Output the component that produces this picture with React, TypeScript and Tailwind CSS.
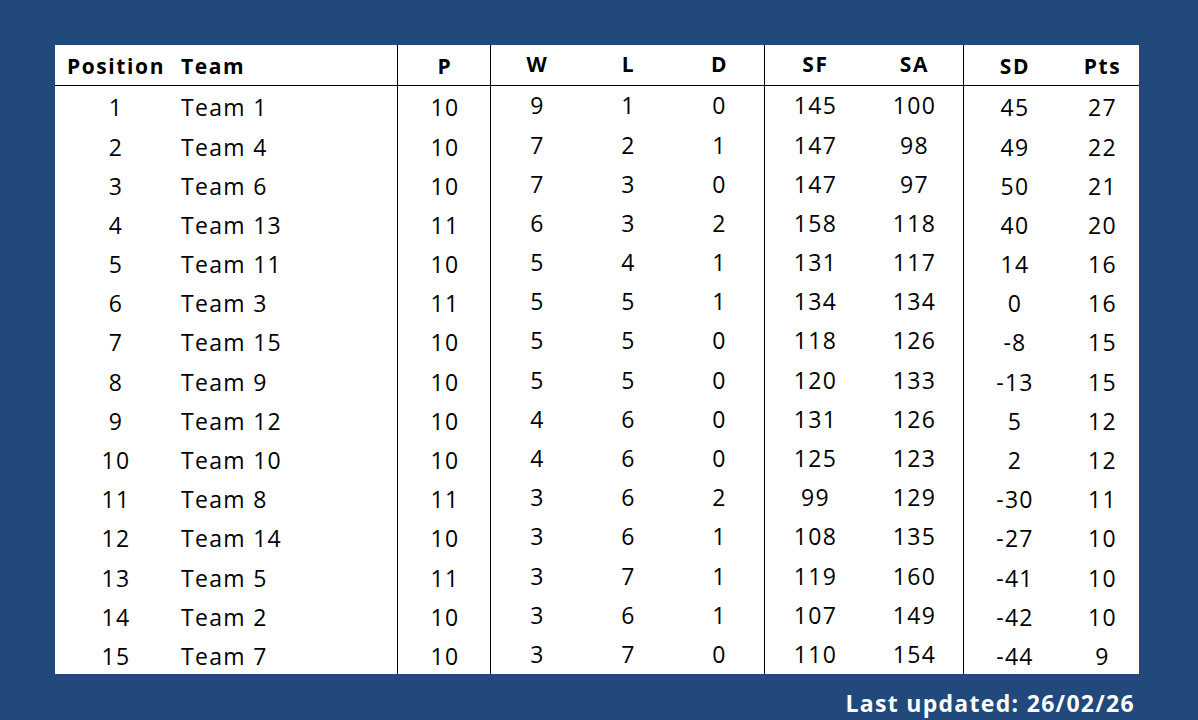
const rows: [number, string, number, number, number, number, number, number, number, number][] = [
  [1, 'Team 1', 10, 9, 1, 0, 145, 100, 45, 27],
  [2, 'Team 4', 10, 7, 2, 1, 147, 98, 49, 22],
  [3, 'Team 6', 10, 7, 3, 0, 147, 97, 50, 21],
  [4, 'Team 13', 11, 6, 3, 2, 158, 118, 40, 20],
  [5, 'Team 11', 10, 5, 4, 1, 131, 117, 14, 16],
  [6, 'Team 3', 11, 5, 5, 1, 134, 134, 0, 16],
  [7, 'Team 15', 10, 5, 5, 0, 118, 126, -8, 15],
  [8, 'Team 9', 10, 5, 5, 0, 120, 133, -13, 15],
  [9, 'Team 12', 10, 4, 6, 0, 131, 126, 5, 12],
  [10, 'Team 10', 10, 4, 6, 0, 125, 123, 2, 12],
  [11, 'Team 8', 11, 3, 6, 2, 99, 129, -30, 11],
  [12, 'Team 14', 10, 3, 6, 1, 108, 135, -27, 10],
  [13, 'Team 5', 11, 3, 7, 1, 119, 160, -41, 10],
  [14, 'Team 2', 10, 3, 6, 1, 107, 149, -42, 10],
  [15, 'Team 7', 10, 3, 7, 0, 110, 154, -44, 9],
];

const grid = 'grid grid-cols-[120px_223px_93px_91px_91px_92px_99px_100px_87px_88px]';

function Row({ cells, header }: { cells: (string | number)[]; header?: boolean }) {
  const h = header
    ? 'h-[41px] border-b border-black font-bold text-[21px] tracking-[1.6px]'
    : 'h-[39.2px] text-[23px] font-medium tracking-[1.3px]';
  return (
    <div className={`${grid} ${h}`}>
      <div className="flex items-center justify-center pl-[2px] pt-1">{cells[0]}</div>
      <div className="flex items-center border-r border-black pl-[6px] pt-1">{cells[1]}</div>
      <div className="flex items-center justify-center border-r border-black pl-[2px] pt-1">{cells[2]}</div>
      <div className="flex items-center justify-center pl-[2px]">{cells[3]}</div>
      <div className="flex items-center justify-center pl-[2px]">{cells[4]}</div>
      <div className="flex items-center justify-center border-r border-black pl-[2px]">{cells[5]}</div>
      <div className="flex items-center justify-center pl-[2px]">{cells[6]}</div>
      <div className="flex items-center justify-center border-r border-black pl-[2px]">{cells[7]}</div>
      <div className="flex items-center justify-center pl-[15px] pt-1">{cells[8]}</div>
      <div className="flex items-center justify-center pl-[15px] pt-1">{cells[9]}</div>
    </div>
  );
}

export default function App() {
  return (
    <div className="h-[720px] w-[1198px] overflow-hidden bg-[#21497b] pl-[55px] pt-[45px] text-black" style={{ fontFamily: '"Open Sans", sans-serif' }}>
      <div className="w-[1084px] bg-white">
        <Row header cells={['Position', 'Team', 'P', 'W', 'L', 'D', 'SF', 'SA', 'SD', 'Pts']} />
        {rows.map((r) => (
          <Row key={r[0]} cells={r} />
        ))}
      </div>
      <div className="mt-[18px] w-[1080px] text-right text-[23px] font-bold leading-[22px] tracking-[1.3px] text-white">
        Last updated: 26/02/26
      </div>
    </div>
  );
}
